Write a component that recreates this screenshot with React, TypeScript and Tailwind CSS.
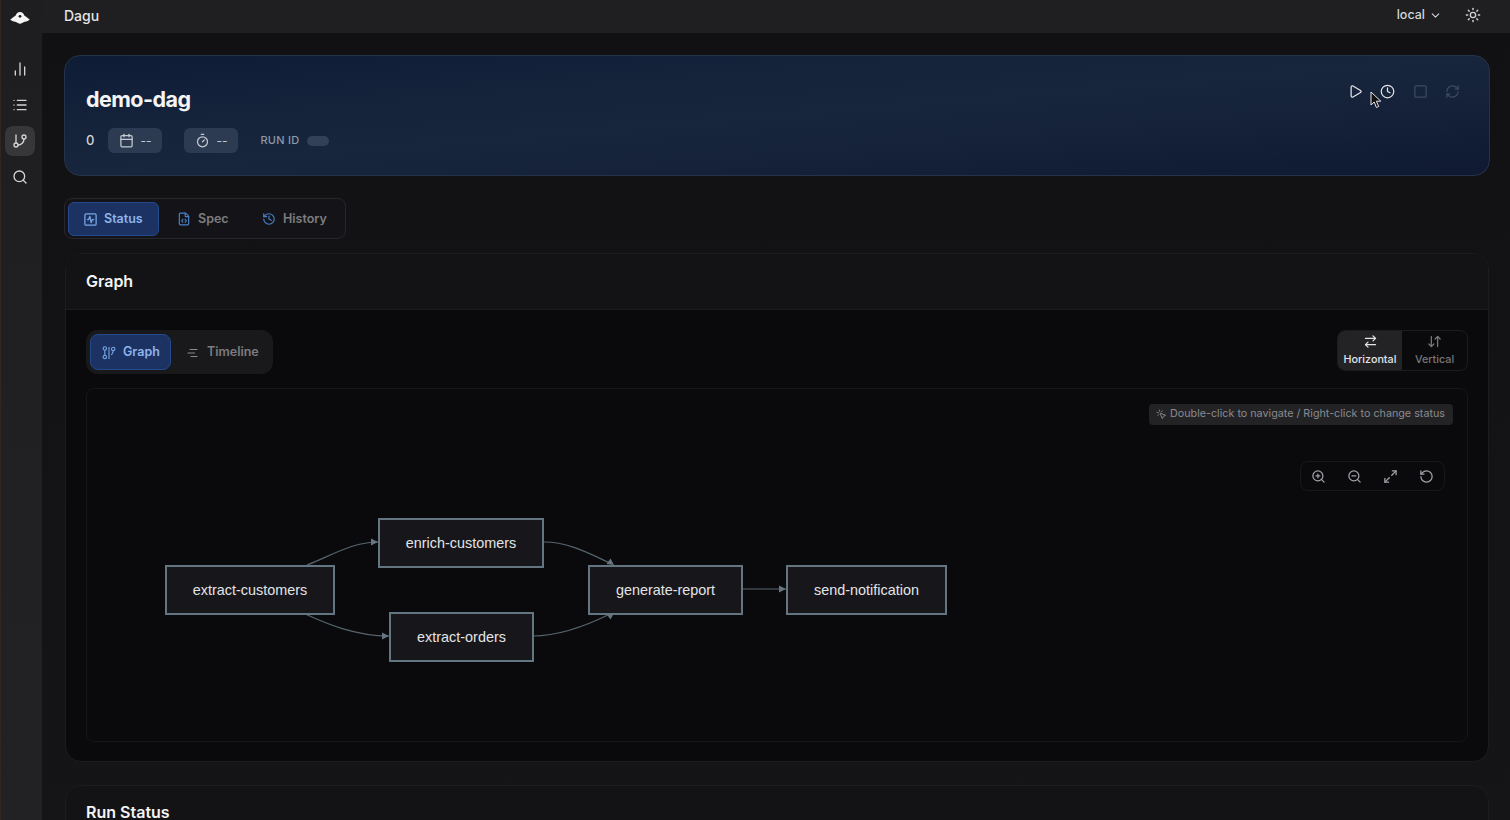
import {
  ArrowDownUp,
  ArrowRightLeft,
  Calendar,
  ChartNoAxesColumn,
  ChevronDown,
  Clock,
  FileCode,
  GitBranch,
  History,
  List,
  Maximize2,
  MousePointerClick,
  Play,
  RefreshCw,
  RotateCcw,
  Search,
  Square,
  SquareActivity,
  Sun,
  Timer,
  ZoomIn,
  ZoomOut,
} from 'lucide-react';

const font = { fontFamily: 'Inter, "Noto Sans", sans-serif' };

const nodes = [
  { label: 'extract-customers', className: 'left-[78px] top-[176px] w-[170px]' },
  { label: 'enrich-customers', className: 'left-[291px] top-[129px] w-[166px]' },
  { label: 'extract-orders', className: 'left-[302px] top-[223px] w-[145px]' },
  { label: 'generate-report', className: 'left-[501px] top-[176px] w-[155px]' },
  { label: 'send-notification', className: 'left-[699px] top-[176px] w-[161px]' },
];

function Logo() {
  return (
    <svg width="20" height="12" viewBox="0 0 20 12" fill="#f4f4f5">
      <path d="M10 0c2.300 0 3.600 1.400 4.300 3.400 1.900 1.100 3.900 2.600 5.500 4.300-1.700 1.100-3.700 1.900-5.800 2.300-1.200.4-2.600 1.700-4 1.700s-2.800-1.300-4-1.700C3.900 9.600 1.900 8.800.2 7.700 1.800 6 3.800 4.500 5.700 3.400 6.400 1.400 7.700 0 10 0z" />
      <circle cx="10" cy="4.300" r="1.400" fill="#1f1f21" />
    </svg>
  );
}

function GraphTabIcon() {
  return (
    <svg width="14" height="14" viewBox="0 0 14 14" fill="none" stroke="#7aa7e6" strokeWidth="1.100">
      <circle cx="2.800" cy="2.500" r="1.700" />
      <circle cx="2.800" cy="11" r="1.700" />
      <path d="M2.800 4.200v5.100M7 1v12" />
      <circle cx="11.200" cy="3" r="1.700" />
      <path d="M11.200 4.700c0 2-1 3-1.800 4.300" />
    </svg>
  );
}

function TimelineIcon() {
  return (
    <svg width="12" height="12" viewBox="0 0 12 12" fill="none" stroke="#8a8a8e" strokeWidth="1.200" strokeLinecap="round">
      <path d="M3 2.500h7M1 6h6.500M4 9.500h6" />
    </svg>
  );
}

function Cursor() {
  return (
    <svg className="absolute left-[1370px] top-[91px]" width="13" height="18" viewBox="0 0 13 18">
      <path d="M1 1v13l3.200-3 2.200 5.500 2.300-1-2.300-5.300h4.400z" fill="#111" stroke="#e8e8e8" strokeWidth="1" />
    </svg>
  );
}

function Edges() {
  const d = [
    'M220 176C244 167 265 153 291 153',
    'M216 224C240 235 268 247 302 247',
    'M457 153C482 153 503 165 525 175',
    'M446 247C475 247 503 235 525 224',
    'M655 200H699',
  ];
  return (
    <svg className="absolute inset-0 h-full w-full" fill="none">
      {d.map((p) => (
        <path key={p} d={p} stroke="#56656f" strokeWidth="1.200" />
      ))}
      <path d="M291 153l-7-3.500v7z" fill="#66757f" />
      <path d="M302 247l-7-3.500v7z" fill="#66757f" />
      <path d="M527 176l-7.500-1 4-5.500z" fill="#66757f" />
      <path d="M527 224l-7.500 1 4 5.500z" fill="#66757f" />
      <path d="M699 200l-7-3.500v7z" fill="#66757f" />
    </svg>
  );
}

export default function App() {
  return (
    <div className="relative flex h-screen overflow-hidden bg-gradient-to-b from-[#111113] to-[#151517] text-white" style={font}>
      {/* Sidebar */}
      <aside className="flex w-[42px] shrink-0 flex-col items-center border-l border-[#33261f] bg-gradient-to-b from-[#1e1e20] to-[#222224] pr-[3px] pt-[12px]">
        <Logo />
        <div className="mt-[30px] flex flex-col items-center gap-[6px] text-[#d4d4d8]">
          <div className="flex h-[30px] w-[30px] items-center justify-center">
            <ChartNoAxesColumn size={16} />
          </div>
          <div className="flex h-[30px] w-[30px] items-center justify-center">
            <List size={16} />
          </div>
          <div className="flex h-[30px] w-[30px] items-center justify-center rounded-lg bg-[#37373a]">
            <GitBranch size={16} />
          </div>
          <div className="flex h-[30px] w-[30px] items-center justify-center">
            <Search size={16} />
          </div>
        </div>
      </aside>

      <div className="flex min-w-0 flex-1 flex-col">
        {/* Top bar */}
        <header className="flex h-[33px] shrink-0 items-center justify-between bg-[#1f1f21] pb-[3px] pl-[22px] pr-[29px]">
          <span className="text-[14px] font-medium text-[#e4e4e7]">Dagu</span>
          <div className="flex items-center gap-[23px]">
            <div className="flex items-center gap-[4px] text-[#d4d4d8]">
              <span className="text-[12.500px] font-medium">local</span>
              <ChevronDown size={13} />
            </div>
            <Sun size={16} className="text-[#d4d4d8]" />
          </div>
        </header>

        <main className="flex min-h-0 flex-1 flex-col pl-[22px] pr-[20px] pt-[22px]">
          {/* DAG header */}
          <section className="flex h-[121px] shrink-0 rounded-2xl border border-[#253349] bg-gradient-to-br from-[#0f1c36] via-[#18263d] to-[#0f1a32] pl-[21px] pr-[28px] pt-[29px]">
            <div>
              <h1 className="text-[21.500px] font-bold leading-[28px] tracking-tight text-[#f4f4f5]">demo-dag</h1>
              <div className="mt-[15px] flex items-center text-[#d4d4d8]">
                <span className="mr-[14px] text-[13px] font-medium">0</span>
                <span className="flex h-[25px] w-[54px] items-center gap-[6px] rounded-md bg-[#2c3b52] pl-[11px] text-[12px] text-[#c4c9d1]">
                  <Calendar size={15} />
                  --
                </span>
                <span className="ml-[22px] flex h-[25px] w-[54px] items-center gap-[6px] rounded-md bg-[#2c3b52] pl-[11px] text-[12px] text-[#c4c9d1]">
                  <Timer size={15} />
                  --
                </span>
                <span className="ml-[22px] text-[11px] font-medium tracking-wide text-[#8e99a9]">RUN ID</span>
                <span className="ml-[7px] h-[10px] w-[22px] rounded-full bg-[#334158]" />
              </div>
            </div>
            <div className="ml-auto mt-[-1px] flex h-[14px] items-center gap-[17.500px] pr-[1px]">
              <Play size={15} className="text-[#e4e4e7]" />
              <Clock size={15} className="text-[#e4e4e7]" />
              <Square size={15} className="text-[#3d4b60]" />
              <RefreshCw size={15} className="text-[#3d4b60]" />
            </div>
          </section>

          {/* Tabs */}
          <nav className="mt-[22px] flex h-[41px] w-[282px] shrink-0 items-center rounded-lg border border-[#27272b] bg-[#141418] px-[3px] text-[12.500px] font-semibold">
            <div className="flex h-[34px] w-[91px] items-center gap-[6px] rounded-md border border-[#234a8c] bg-[#1b3263] pl-[14px] pt-px text-[#8fb4ec]">
              <SquareActivity size={15} className="text-[#7aa7e6]" />
              Status
            </div>
            <div className="flex h-[34px] w-[85px] items-center gap-[7px] pl-[18px] pt-px text-[#7c7c80]">
              <FileCode size={14} className="text-[#4a80cc]" />
              Spec
            </div>
            <div className="flex h-[34px] w-[97px] items-center gap-[7px] pl-[18px] pt-px text-[#7c7c80]">
              <History size={14} className="text-[#4a80cc]" />
              History
            </div>
          </nav>

          {/* Graph card */}
          <section className="mx-px mt-[14px] h-[509px] shrink-0 overflow-hidden rounded-2xl border border-[#1c1c1f] bg-[#0a0a0c]">
            <div className="flex h-[56px] items-center border-b border-[#1c1c1f] bg-[#131315] pb-[2px] pl-[20px]">
              <h2 className="text-[16px] font-semibold text-[#f4f4f5]">Graph</h2>
            </div>
            <div className="px-[20px] pt-[20px]">
              <div className="flex items-start justify-between">
                <div className="flex h-[44px] w-[187px] items-center gap-[4px] rounded-xl bg-[#19191c] px-[4px] text-[12.500px] font-semibold">
                  <div className="flex h-[36px] w-[81px] items-center gap-[7px] rounded-lg border border-[#234a8c] bg-[#1b3263] pl-[11px] pt-px text-[#8fb4ec]">
                    <GraphTabIcon />
                    Graph
                  </div>
                  <div className="flex h-[36px] items-center gap-[8px] pl-[12px] pt-px text-[#7c7c80]">
                    <TimelineIcon />
                    Timeline
                  </div>
                </div>
                <div className="flex h-[41px] w-[131px] overflow-hidden rounded-lg border border-[#1c1c1f] text-[10.750px] font-medium">
                  <div className="flex w-[64px] flex-col items-center gap-[3px] bg-[#232326] pt-[3px] leading-[15px] text-[#e4e4e7]">
                    <ArrowRightLeft size={15} />
                    Horizontal
                  </div>
                  <div className="flex flex-1 flex-col items-center gap-[3px] pt-[3px] leading-[15px] text-[#77777b]">
                    <ArrowDownUp size={15} />
                    Vertical
                  </div>
                </div>
              </div>

              {/* Canvas */}
              <div className="relative mt-[14px] h-[354px] rounded-lg border border-[#16161a]">
                <div className="absolute right-[14px] top-[15px] flex h-[21px] items-center gap-[3px] rounded bg-[#232326] pl-[7px] pr-[8px] text-[10.750px] font-normal text-[#8a8a8e]">
                  <MousePointerClick size={11} />
                  Double-click to navigate / Right-click to change status
                </div>
                <div className="absolute right-[22px] top-[72px] grid h-[30px] w-[145px] grid-cols-4 items-center justify-items-center rounded-lg border border-[#18181b] text-[#a1a1aa]">
                  <ZoomIn size={15} />
                  <ZoomOut size={15} />
                  <Maximize2 size={15} />
                  <RotateCcw size={15} />
                </div>
                <Edges />
                {nodes.map((n) => (
                  <div
                    key={n.label}
                    className={`absolute flex h-[50px] items-center justify-center border-2 border-[#627580] bg-[#17171b] pt-[2px] text-[14.400px] text-[#e4e4e6] ${n.className}`}
                    style={{ fontFamily: '"Liberation Sans", Arial, sans-serif' }}
                  >
                    {n.label}
                  </div>
                ))}
              </div>
            </div>
          </section>

          {/* Run status */}
          <section className="mx-px mt-[23px] h-[200px] shrink-0 rounded-t-2xl border border-[#1c1c1f] bg-[#131315] pl-[20px] pt-[16px]">
            <h2 className="text-[16px] font-semibold leading-[20px] text-[#f4f4f5]">Run Status</h2>
          </section>
        </main>
      </div>
      <Cursor />
    </div>
  );
}
